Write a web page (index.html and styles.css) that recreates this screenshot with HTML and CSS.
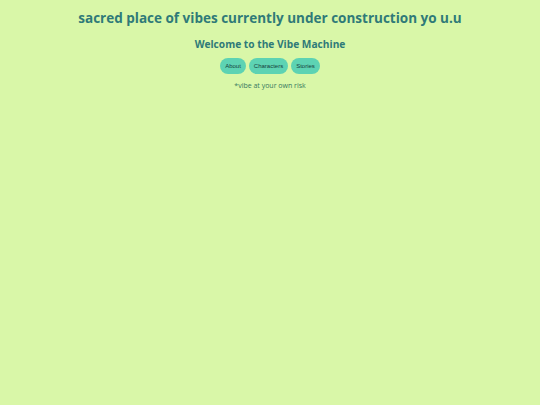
FILE: index.html
```html
<!DOCTYPE html>
<html>
<head>
<meta charset="utf-8">
<link rel="stylesheet" href="styles.css">
</head>
<body>
<div class="page">
  <h1 class="title">sacred place of vibes currently under construction yo u.u</h1>
  <h2 class="subtitle">Welcome to the Vibe Machine</h2>
  <nav class="nav">
    <button class="btn">About</button>
    <button class="btn">Characters</button>
    <button class="btn">Stories</button>
  </nav>
  <p class="note">*vibe at your own risk</p>
</div>
</body>
</html>
```
FILE: styles.css
```css
html, body {
  margin: 0;
  padding: 0;
  background: #d9f7a8;
}
.page {
  display: flex;
  flex-direction: column;
  align-items: center;
  font-family: "Open Sans", sans-serif;
  color: #2f7a78;
  padding-top: 8px;
}
.title {
  margin: 0;
  font-size: 13.5px;
  font-weight: 700;
  line-height: 20px;
}
.subtitle {
  margin: 9px 0 0;
  font-size: 10.2px;
  font-weight: 700;
  line-height: 14px;
}
.nav {
  display: flex;
  gap: 3px;
  margin-top: 7px;
}
.btn {
  font-family: "Liberation Sans", Arial, sans-serif;
  font-size: 6px;
  color: #173f3c;
  background: #5dd3b3;
  border: none;
  border-radius: 8px;
  height: 16px;
  padding: 0 5px;
}
.note {
  margin: 7px 0 0;
  font-size: 7px;
  line-height: 10px;
  color: #36775f;
}
```
